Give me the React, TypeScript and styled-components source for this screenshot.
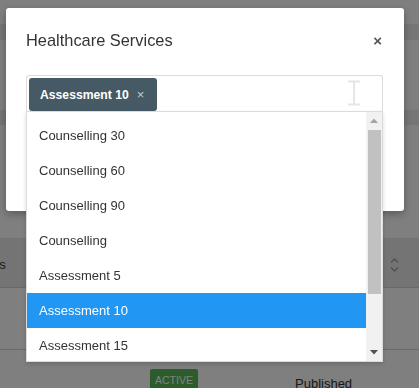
import React from 'react';
import styled, { createGlobalStyle } from 'styled-components';

const GlobalStyle = createGlobalStyle`
  html, body {
    margin: 0;
    padding: 0;
    overflow: hidden;
  }
  body {
    font-family: "Liberation Sans", Arial, sans-serif;
    color: #333;
  }
`;

// page behind the modal
const Page = styled.div`
  width: 419px;
  height: 388px;
  overflow: hidden;
  background: #ffffff;
  display: flex;
  flex-direction: column;
`;

const Band = styled.div<{ $h: number; $shade?: boolean }>`
  flex: none;
  height: ${(p) => p.$h}px;
  background: ${(p) => (p.$shade ? '#ececec' : '#ffffff')};
`;

const TableHead = styled.div`
  flex: none;
  height: 50px;
  background: #e8e8e8;
  border-bottom: 1px solid #d2d2d2;
  display: flex;
  align-items: center;
  justify-content: space-between;
  padding-right: 20px;
  padding-top: 4px;
  box-sizing: border-box;
`;

const HeadLabel = styled.span`
  font-size: 13px;
  color: #333;
  margin-left: -47px;
`;

const TableRow = styled.div<{ $h: number }>`
  flex: none;
  height: ${(p) => p.$h}px;
  border-bottom: 1px solid #d2d2d2;
  display: grid;
  grid-template-columns: 150px 145px 1fr;
  align-items: start;
  padding-top: 19px;
  box-sizing: border-box;
`;

const Badge = styled.span`
  grid-column: 2;
  justify-self: start;
  background: #58b858;
  color: #ffffff;
  font-size: 10.5px;
  padding: 5px 5px;
  border-radius: 2px;
`;

const CellText = styled.span`
  grid-column: 3;
  font-size: 13px;
  color: #333;
  padding-top: 7px;
`;

const Overlay = styled.div`
  position: fixed;
  inset: 0;
  background: rgba(0, 0, 0, 0.5);
`;

// modal
const ModalBox = styled.div`
  position: fixed;
  left: 6px;
  top: 8px;
  width: 398px;
  height: 203px;
  background: #ffffff;
  border-radius: 3px;
  box-shadow: 0 3px 9px rgba(0, 0, 0, 0.3);
  box-sizing: border-box;
  padding: 23px 21px 0 20px;
`;

const ModalHeader = styled.div`
  display: flex;
  align-items: center;
  justify-content: space-between;
  height: 19px;
`;

const Title = styled.h4`
  margin: 0;
  font-size: 16.4px;
  font-weight: normal;
  color: #333;
  line-height: 19px;
`;

const CloseBtn = styled.span`
  font-size: 15px;
  font-weight: bold;
  color: #555;
  line-height: 19px;
  cursor: pointer;
  margin-right: 1px;
`;

const SelectWrap = styled.div`
  position: relative;
  margin-top: 25px;
`;

const SelectBox = styled.div`
  height: 36px;
  box-sizing: border-box;
  border: 1px solid #dcdcdc;
  border-bottom: none;
  border-radius: 3px 3px 0 0;
  padding: 2px 2px 0;
  display: flex;
  align-items: stretch;
`;

const Tag = styled.span`
  display: inline-flex;
  align-items: center;
  gap: 8px;
  background: #455a64;
  color: #ffffff;
  font-size: 12.2px;
  font-weight: bold;
  padding: 0 13px 0 11px;
  border-radius: 3px;
`;

const TagRemove = styled.span`
  font-weight: normal;
  font-size: 13px;
  color: #c4ccd0;
`;

const Cursor = styled.svg`
  position: absolute;
  left: 320px;
  top: 5px;
`;

const Dropdown = styled.div`
  position: absolute;
  left: 0;
  right: 0;
  top: 36px;
  height: 251px;
  box-sizing: border-box;
  border: 1px solid #dcdcdc;
  background: #ffffff;
  box-shadow: 0 2px 4px rgba(0, 0, 0, 0.15);
  display: flex;
  overflow: hidden;
`;

const Options = styled.ul`
  flex: 1;
  margin: 0;
  padding: 6px 0 0;
  list-style: none;
  overflow: hidden;
`;

const Option = styled.li<{ $active?: boolean }>`
  height: 35px;
  line-height: 35px;
  padding-left: 12px;
  font-size: 13px;
  color: ${(p) => (p.$active ? '#ffffff' : '#333')};
  background: ${(p) => (p.$active ? '#2196f3' : 'transparent')};
`;

const ScrollBar = styled.div`
  flex: none;
  width: 16px;
  background: #f1f1f1;
  display: flex;
  flex-direction: column;
  align-items: center;
`;

const ScrollArrow = styled.div`
  height: 17px;
  width: 100%;
  display: flex;
  align-items: center;
  justify-content: center;
`;

const Thumb = styled.div`
  width: 13px;
  height: 164px;
  margin-top: 1px;
  background: #c1c1c1;
`;

const ScrollGap = styled.div`
  flex: 1;
`;

const SortIcon = () => (
  <svg width="9" height="16" viewBox="0 0 9 16">
    <path d="M1 5.5 L4.5 2 L8 5.5 M1 10.5 L4.5 14 L8 10.5" fill="none" stroke="#9aa3ad" strokeWidth="1.4" />
  </svg>
);

const options = [
  'Counselling 30',
  'Counselling 60',
  'Counselling 90',
  'Counselling',
  'Assessment 5',
  'Assessment 10',
  'Assessment 15',
];

const App: React.FC = () => {
  const selected = 'Assessment 10';

  return (
    <>
      <GlobalStyle />
      <Page>
        <Band $h={24} />
        <Band $h={16} $shade />
        <Band $h={70} />
        <Band $h={15} $shade />
        <Band $h={113} />
        <TableHead>
          <HeadLabel>Sessions</HeadLabel>
          <SortIcon />
        </TableHead>
        <TableRow $h={62} />
        <TableRow $h={60}>
          <Badge>ACTIVE</Badge>
          <CellText>Published</CellText>
        </TableRow>
      </Page>
      <Overlay />
      <ModalBox>
        <ModalHeader>
          <Title>Healthcare Services</Title>
          <CloseBtn>×</CloseBtn>
        </ModalHeader>
        <SelectWrap>
          <SelectBox>
            <Tag>
              {selected}
              <TagRemove>×</TagRemove>
            </Tag>
          </SelectBox>
          <Cursor width="16" height="26" viewBox="0 0 16 26">
            <path d="M2 1.5 H14 M8 1.5 V24.5 M2 24.5 H14" fill="none" stroke="#e6e6e6" strokeWidth="2" />
          </Cursor>
          <Dropdown>
            <Options>
              {options.map((o) => (
                <Option key={o} $active={o === selected}>
                  {o}
                </Option>
              ))}
            </Options>
            <ScrollBar>
              <ScrollArrow>
                <svg width="8" height="5" viewBox="0 0 8 5">
                  <path d="M0 5 L4 0.5 L8 5 Z" fill="#a3a3a3" />
                </svg>
              </ScrollArrow>
              <Thumb />
              <ScrollGap />
              <ScrollArrow>
                <svg width="8" height="5" viewBox="0 0 8 5">
                  <path d="M0 0 L4 4.5 L8 0 Z" fill="#505050" />
                </svg>
              </ScrollArrow>
            </ScrollBar>
          </Dropdown>
        </SelectWrap>
      </ModalBox>
    </>
  );
};

export default App;
